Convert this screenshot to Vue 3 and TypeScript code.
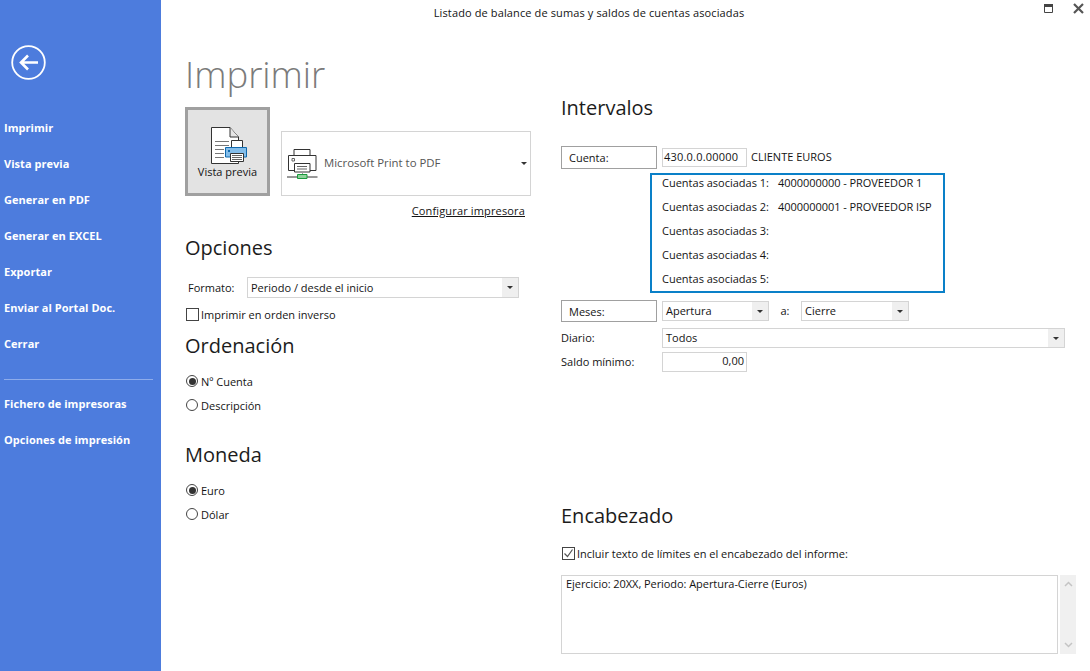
<template>
  <div class="window">
    <aside class="sidebar">
      <svg class="back" width="35" height="35" viewBox="0 0 35 35">
        <circle cx="17.5" cy="17.5" r="16.3" fill="none" stroke="#fff" stroke-width="1.8" />
        <path d="M10 17.5 H27 M17 10.500 L10 17.5 L17 24.500" fill="none" stroke="#fff" stroke-width="2.6" />
      </svg>
      <nav class="menu">
        <a v-for="item in mainMenu" :key="item" class="menu-item">{{ item }}</a>
      </nav>
      <div class="menu-divider"></div>
      <nav class="menu second">
        <a v-for="item in printMenu" :key="item" class="menu-item">{{ item }}</a>
      </nav>
    </aside>

    <main class="content">
      <header class="titlebar">
        <span class="title">Listado de balance de sumas y saldos de cuentas asociadas</span>
        <svg class="win-max" width="10" height="10" viewBox="0 0 10 10">
          <path d="M.5.5h8v8h-8z" fill="none" stroke="#444" />
          <path d="M0 0h9v3H0z" fill="#444" />
        </svg>
        <svg class="win-close" width="11" height="11" viewBox="0 0 11 11">
          <path d="M1 1l9 9M10 1l-9 9" stroke="#555" stroke-width="2.2" />
        </svg>
      </header>

      <div class="columns">
        <section class="col-left">
          <h1 class="page-title">Imprimir</h1>

          <div class="print-row">
            <button class="preview-btn">
              <svg class="preview-icon" width="36" height="37" viewBox="0 0 36 37">
                <path d="M.5.5H19L27.500 10V36.500H.5Z" fill="#fff" stroke="#333" />
                <path d="M19 .5V10H27.500" fill="#e6e6e6" stroke="#333" />
                <path d="M4 14.500h14M4 18.500h14M4 22.500h9M4 26.500h9M4 30.500h9" stroke="#777" />
                <path d="M20.500 13.500h11v7h-11z" fill="#fff" stroke="#333" />
                <path d="M14.500 20.500h21v9.500h-21z" fill="#83bdea" stroke="#0f69ad" />
                <path d="M17 23h2v2h-2z" fill="#0f69ad" />
                <path d="M19.500 26.500h13v8h-13z" fill="#fff" stroke="#333" />
                <path d="M21 28.500h10M21 30.500h10M21 32.500h10" stroke="#666" />
              </svg>
              <span>Vista previa</span>
            </button>
            <div class="printer-select">
              <svg width="31" height="31" viewBox="0 0 31 31">
                <path d="M7 .5h16v6.500H7z" fill="#fff" stroke="#333" />
                <path d="M1.500 6.500h27.500v15H1.500z" fill="#fff" stroke="#333" />
                <path d="M5 9.500h2.500v2.500H5z" fill="#fff" stroke="#666" />
                <path d="M7.500 14.500h15.500v8.500H7.500z" fill="#fff" stroke="#333" />
                <path d="M10 17.500h10M10 20h10" stroke="#666" />
                <path d="M15.500 23v2.500" stroke="#999" />
                <path d="M0 28h10.500M20 28h10.500" stroke="#333" />
                <path d="M10.500 25.500h9.500v4h-9.500z" fill="#8fd29b" stroke="#189a3c" />
              </svg>
              <span class="printer-name">Microsoft Print to PDF</span>
              <i class="caret small"></i>
            </div>
          </div>
          <div class="configure"><a>Configurar impresora</a></div>

          <h2 class="heading options">Opciones</h2>
          <div class="format-row">
            <span class="format-label">Formato:</span>
            <div class="combo format-combo">
              <span>Periodo / desde el inicio</span>
              <b class="combo-arrow"><i class="caret"></i></b>
            </div>
          </div>
          <label class="check-row reverse"><i class="check"></i>Imprimir en orden inverso</label>

          <h2 class="heading sort">Ordenación</h2>
          <div class="radio-group">
            <label v-for="r in sortOptions" :key="r.label" class="radio-row">
              <i class="radio" :class="{ on: r.on }"></i>{{ r.label }}
            </label>
          </div>

          <h2 class="heading currency">Moneda</h2>
          <div class="radio-group">
            <label v-for="r in currencyOptions" :key="r.label" class="radio-row">
              <i class="radio" :class="{ on: r.on }"></i>{{ r.label }}
            </label>
          </div>
        </section>

        <section class="col-right">
          <h2 class="heading intervals">Intervalos</h2>

          <div class="field-row account-row">
            <span class="range-btn">Cuenta:</span>
            <div class="input account-input">430.0.0.00000</div>
            <span class="account-name">CLIENTE EUROS</span>
          </div>

          <div class="linked-box">
            <div v-for="row in linkedAccounts" :key="row.label" class="linked-row">
              <span class="linked-label">{{ row.label }}</span>
              <span class="linked-value">{{ row.value }}</span>
            </div>
          </div>

          <div class="field-row months-row">
            <span class="range-btn">Meses:</span>
            <div class="combo month-combo">
              <span>Apertura</span>
              <b class="combo-arrow"><i class="caret"></i></b>
            </div>
            <span class="month-sep">a:</span>
            <div class="combo month-combo last">
              <span>Cierre</span>
              <b class="combo-arrow"><i class="caret"></i></b>
            </div>
          </div>

          <div class="field-row diary-row">
            <span class="field-label">Diario:</span>
            <div class="combo diary-combo">
              <span>Todos</span>
              <b class="combo-arrow"><i class="caret"></i></b>
            </div>
          </div>

          <div class="field-row balance-row">
            <span class="field-label">Saldo mínimo:</span>
            <div class="input balance-input">0,00</div>
          </div>

          <h2 class="heading header-title">Encabezado</h2>
          <label class="check-row include">
            <i class="check">
              <svg width="11" height="11" viewBox="0 0 11 11">
                <path d="M1.500 5.500l3 3 5-7" fill="none" stroke="#555" stroke-width="1.200" />
              </svg>
            </i>
            Incluir texto de límites en el encabezado del informe:
          </label>

          <div class="memo-row">
            <div class="memo">Ejercicio: 20XX, Periodo: Apertura-Cierre (Euros)</div>
            <div class="scrollbar">
              <svg width="9" height="6" viewBox="0 0 9 6"><path d="M1 5l3.500-3.500L8 5" fill="none" stroke="#c4c4c4" stroke-width="1.500" /></svg>
              <svg width="9" height="6" viewBox="0 0 9 6"><path d="M1 1l3.500 3.500L8 1" fill="none" stroke="#c4c4c4" stroke-width="1.500" /></svg>
            </div>
          </div>
        </section>
      </div>
    </main>
  </div>
</template>

<script setup lang="ts">
interface RadioOption {
  label: string;
  on: boolean;
}

const mainMenu: string[] = [
  'Imprimir',
  'Vista previa',
  'Generar en PDF',
  'Generar en EXCEL',
  'Exportar',
  'Enviar al Portal Doc.',
  'Cerrar',
];
const printMenu: string[] = ['Fichero de impresoras', 'Opciones de impresión'];

const sortOptions: RadioOption[] = [
  { label: 'Nº Cuenta', on: true },
  { label: 'Descripción', on: false },
];
const currencyOptions: RadioOption[] = [
  { label: 'Euro', on: true },
  { label: 'Dólar', on: false },
];

const linkedAccounts = [
  { label: 'Cuentas asociadas 1:', value: '4000000000 - PROVEEDOR 1' },
  { label: 'Cuentas asociadas 2:', value: '4000000001 - PROVEEDOR ISP' },
  { label: 'Cuentas asociadas 3:', value: '' },
  { label: 'Cuentas asociadas 4:', value: '' },
  { label: 'Cuentas asociadas 5:', value: '' },
];
</script>

<style>
html,
body {
  margin: 0;
  background: #fff;
}
</style>

<style scoped>
.window {
  display: flex;
  width: 1090px;
  height: 671px;
  overflow: hidden;
  font-family: 'Open Sans', 'Noto Sans', sans-serif;
  font-size: 11px;
  color: #141414;
  background: #fff;
}

.sidebar {
  width: 161px;
  flex-shrink: 0;
  background: #4d7cdd;
  color: #fff;
  padding-top: 45px;
  box-sizing: border-box;
}

.back {
  display: block;
  margin-left: 11px;
}

.menu {
  display: flex;
  flex-direction: column;
  gap: 16px;
  margin-top: 38px;
}

.menu.second {
  margin-top: 14px;
}

.menu-item {
  height: 20px;
  line-height: 20px;
  padding-left: 4px;
  font-weight: 700;
  font-size: 11px;
  letter-spacing: 0.04px;
}

.menu-divider {
  height: 1px;
  margin: 25px 8px 0 4px;
  background: #8eaceb;
}

.content {
  flex: 1;
  min-width: 0;
}

.titlebar {
  position: relative;
  height: 26px;
  line-height: 26px;
  text-align: center;
  padding-right: 73px;
  letter-spacing: 0.12px;
}

.win-max {
  position: absolute;
  left: 883px;
  top: 4px;
}

.win-close {
  position: absolute;
  left: 912px;
  top: 3px;
}

.columns {
  display: flex;
}

.col-left {
  width: 346px;
  margin-left: 24px;
}

.col-right {
  width: 515px;
  margin-left: 30px;
}

.page-title {
  margin: 23px 0 0;
  height: 50px;
  line-height: 50px;
  font-size: 36.5px;
  font-weight: 300;
  color: #7b7b7b;
}

.heading {
  margin: 0;
  height: 30px;
  line-height: 30px;
  font-size: 20px;
  font-weight: 400;
  color: #1c1c1c;
}

.print-row {
  display: flex;
  align-items: flex-end;
  gap: 11px;
  margin-top: 8px;
}

.preview-btn {
  display: flex;
  flex-direction: column;
  align-items: center;
  width: 85px;
  height: 89px;
  padding: 17px 0 0;
  box-sizing: border-box;
  background: #e3e3e3;
  border: 3px solid #a0a0a0;
  font: inherit;
  color: inherit;
}

.preview-icon {
  flex-shrink: 0;
  margin-left: 3px;
}

.printer-select {
  position: relative;
  display: flex;
  align-items: flex-start;
  width: 250px;
  height: 65px;
  box-sizing: border-box;
  border: 1px solid #d4d4d4;
  padding: 17px 0 0 5px;
}

.printer-name {
  margin: 6px 0 0 6px;
  font-size: 11.4px;
  color: #555;
}

.caret {
  display: block;
  width: 0;
  height: 0;
  border-left: 3px solid transparent;
  border-right: 3px solid transparent;
  border-top: 3px solid #333;
}

.caret.small {
  position: absolute;
  right: 3px;
  top: 30px;
}

.configure {
  height: 30px;
  line-height: 30px;
  text-align: right;
  padding-right: 6px;
  letter-spacing: 0.15px;
}

.configure a {
  text-decoration: underline;
}

.options {
  margin-top: 7px;
}

.format-row {
  display: flex;
  align-items: center;
  margin-top: 14px;
}

.format-label {
  width: 62px;
  padding-left: 3px;
  box-sizing: border-box;
}

.combo {
  display: flex;
  align-items: center;
  justify-content: space-between;
  box-sizing: border-box;
  border: 1px solid #d4d4d4;
  padding-left: 3px;
  background: #fff;
}

.combo-arrow {
  display: flex;
  align-items: center;
  justify-content: center;
  align-self: stretch;
  width: 16px;
  background: #efefef;
}

.format-combo {
  width: 272px;
  height: 21px;
}

.check-row {
  display: flex;
  align-items: center;
  height: 14px;
}

.check {
  display: flex;
  width: 13px;
  height: 13px;
  box-sizing: border-box;
  border: 1px solid #444;
  margin: 0 2px 0 1px;
  align-items: center;
  justify-content: center;
}

.reverse {
  margin-top: 9px;
}

.sort {
  margin-top: 10px;
}

.radio-group {
  margin-top: 8px;
}

.radio-row {
  display: flex;
  align-items: center;
  height: 24px;
}

.radio {
  position: relative;
  width: 12px;
  height: 12px;
  box-sizing: border-box;
  border: 1px solid #444;
  border-radius: 50%;
  margin: 0 3px 0 1px;
}

.radio.on::after {
  content: '';
  position: absolute;
  left: 1.500px;
  top: 1.500px;
  width: 7px;
  height: 7px;
  border-radius: 50%;
  background: #333;
}

.currency {
  margin-top: 23px;
}

.intervals {
  margin-top: 67px;
}

.field-row {
  display: flex;
  align-items: center;
}

.account-row {
  height: 23px;
  margin-top: 23px;
}

.range-btn {
  display: block;
  width: 96px;
  height: 23px;
  line-height: 21px;
  box-sizing: border-box;
  border: 1px solid #a0a0a0;
  padding-left: 7px;
  margin-right: 5px;
}

.input {
  box-sizing: border-box;
  border: 1px solid #d4d4d4;
  padding: 0 2px 0 1px;
}

.account-input {
  width: 85px;
  height: 19px;
  line-height: 15px;
  letter-spacing: 0.2px;
}

.account-name {
  margin: 0 0 2px 4px;
}

.linked-box {
  display: flex;
  flex-direction: column;
  gap: 8px;
  width: 295px;
  height: 120px;
  box-sizing: border-box;
  margin: 4px 0 0 89px;
  padding-left: 10px;
  border: 2px solid #0a80c8;
}

.linked-row {
  display: flex;
  height: 16px;
  line-height: 16px;
}

.linked-label {
  width: 116px;
  flex-shrink: 0;
}

.linked-value {
  letter-spacing: -0.05px;
}

.months-row {
  height: 22px;
  margin-top: 7px;
}

.months-row .range-btn {
  height: 22px;
}

.month-combo {
  width: 107px;
  height: 20px;
}

.month-combo.last {
  width: 108px;
}

.month-combo span,
.diary-combo span,
.month-sep,
.field-label {
  margin-bottom: 2px;
}

.month-sep {
  width: 32px;
  text-align: center;
}

.diary-row {
  height: 20px;
  margin-top: 6px;
}

.field-label {
  width: 101px;
}

.diary-combo {
  width: 403px;
  height: 20px;
}

.balance-row {
  height: 20px;
  margin-top: 4px;
}

.balance-input {
  width: 85px;
  height: 20px;
  line-height: 16px;
  text-align: right;
}

.header-title {
  margin-top: 129px;
}

.include {
  margin-top: 15px;
}

.memo-row {
  display: flex;
  gap: 2px;
  height: 79px;
  margin-top: 15px;
}

.memo {
  width: 497px;
  box-sizing: border-box;
  border: 1px solid #d4d4d4;
  padding: 0 4px;
  letter-spacing: -0.06px;
}

.scrollbar {
  display: flex;
  flex-direction: column;
  align-items: center;
  justify-content: space-between;
  width: 16px;
  padding: 6px 0;
  box-sizing: border-box;
  background: #f0f0f0;
}
</style>
